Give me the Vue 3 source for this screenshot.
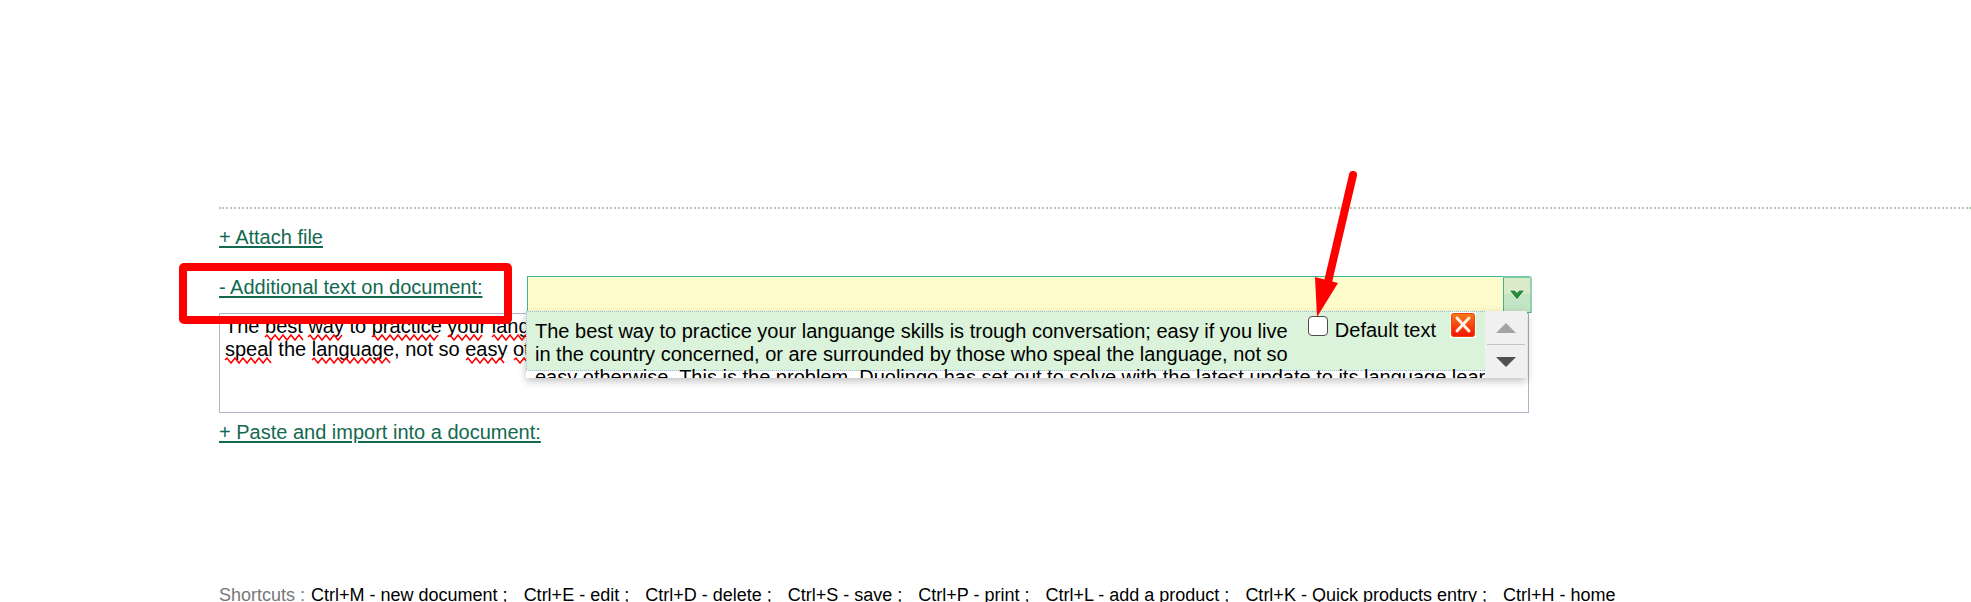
<script setup>
import { ref } from 'vue'

const search = ref('')
const isDefault = ref(false)
const documentText = ref(
  'The best way to practice your languange skills is trough conversation; easy if you live in the country concerned, or are surrounded by those who speal the language, not so easy otherwise.'
)
const suggestion = [
  'The best way to practice your languange skills is trough conversation; easy if you live',
  'in the country concerned, or are surrounded by those who speal the language, not so',
  'easy otherwise. This is the problem. Duolingo has set out to solve with the latest update to its language learning',
]
const shortcuts = [
  'Ctrl+M - new document',
  'Ctrl+E - edit',
  'Ctrl+D - delete',
  'Ctrl+S - save',
  'Ctrl+P - print',
  'Ctrl+L - add a product',
  'Ctrl+K - Quick products entry',
  'Ctrl+H - home',
]

// Spelling marks: start x, end x and line top, relative to the text box
const misspelled = [
  [46, 84, 22], [89, 124, 22], [153, 222, 22], [229, 266, 22], [273, 330, 22],
  [6, 52, 45], [93, 174, 45], [247, 288, 45], [295, 330, 45],
]
function wave([from, to, y]) {
  let d = `M${from} ${y + 2}L${from + 2} ${y}`
  for (let x = from + 6, low = true; x <= to; x += 4, low = !low) d += `L${x} ${low ? y + 5 : y}`
  return d
}
</script>

<template>
  <main class="page">
    <section class="options">
      <p class="row"><a href="#attach">+ Attach file</a></p>
      <div class="row heading">
        <a href="#additional" class="toggle">- Additional text on document:</a>
        <svg class="frame" width="336" height="64" viewBox="0 0 336 64" aria-hidden="true">
          <rect x="5" y="5" width="325" height="53" rx="1" fill="none" stroke="#f00" stroke-width="8" stroke-linejoin="round" />
        </svg>
        <div class="combo">
          <input v-model="search" type="text" aria-label="Saved texts" />
          <button type="button" class="drop" aria-label="Show saved texts">
            <svg width="18" height="14" viewBox="0 0 18 14"><path d="M1 2h6l2 2.500 2-2.500h6L9 12z" fill="#268a38" stroke="#eef8ea" stroke-width="1" /></svg>
          </button>
          <div class="popup">
            <div class="list">
              <div class="item">
                <div class="text"><div v-for="line in suggestion" :key="line">{{ line }}</div></div>
                <label class="default"><input v-model="isDefault" type="checkbox" />Default text</label>
                <button type="button" class="close" aria-label="Delete text">
                  <svg width="26" height="26" viewBox="0 0 26 26">
                    <defs>
                      <linearGradient id="close-fill" x1="0" y1="0" x2="0" y2="1">
                        <stop offset="0" stop-color="#f87a16" /><stop offset="0.5" stop-color="#f4470f" /><stop offset="1" stop-color="#f01400" />
                      </linearGradient>
                    </defs>
                    <rect width="26" height="26" fill="#fff" />
                    <rect x="1.5" y="1.5" width="23" height="23" rx="2" fill="url(#close-fill)" stroke="#e8440c" />
                    <path d="M7 6L19 19M19 6L7 19" stroke="#fff3e6" stroke-width="3" stroke-linecap="round" />
                  </svg>
                </button>
              </div>
            </div>
            <div class="scroll">
              <button type="button" aria-label="Scroll up"><svg width="20" height="10" viewBox="0 0 20 10"><path d="M0 10L10 0L20 10z" fill="#a3a3a3" /></svg></button>
              <button type="button" aria-label="Scroll down"><svg width="20" height="10" viewBox="0 0 20 10"><path d="M0 0H20L10 10z" fill="#505050" /></svg></button>
            </div>
          </div>
          <svg class="arrow" width="44" height="148" viewBox="0 0 44 148" aria-hidden="true">
            <path d="M39 5L14 112" stroke="#f00" stroke-width="8" stroke-linecap="round" />
            <path d="M1 107L24 113L3 147z" fill="#f00" />
          </svg>
        </div>
      </div>
      <div class="editor">
        <textarea v-model="documentText" aria-label="Additional text on document" spellcheck="false"></textarea>
        <svg class="marks" width="320" height="60" viewBox="0 0 320 60" aria-hidden="true">
          <path v-for="mark in misspelled" :key="mark.join()" :d="wave(mark)" fill="none" stroke="#f00" stroke-width="1.5" />
        </svg>
      </div>
      <p class="row paste"><a href="#paste">+ Paste and import into a document:</a></p>
    </section>
    <footer class="shortcuts">
      <span class="label">Shortcuts :</span>
      <span v-for="(s, i) in shortcuts" :key="s" class="key">{{ s }}{{ i < shortcuts.length - 1 ? ' ;' : '' }}</span>
    </footer>
  </main>
</template>

<style>
body { margin: 0; background: #fff; }
html { overflow: hidden; }
</style>

<style scoped>
.page {
  padding: 207px 0 0 219px;
  font: 20px/23px "Liberation Sans", Arial, sans-serif;
  color: #000;
}
.options { border-top: 2px dotted #b4ccb4; padding-top: 17px; }
.row { margin: 0; }
a { color: #13694f; text-decoration: underline; text-decoration-thickness: 2px; text-underline-offset: 2px; }
.heading { position: relative; display: flex; width: 1313px; max-width: 100%; height: 37px; margin-top: 27px; }
.toggle { flex: none; width: 308px; }
.frame { position: absolute; left: -41px; top: -14px; z-index: 4; }
.combo { position: relative; flex: 1; display: flex; }
.combo > input {
  flex: 1; min-width: 0; box-sizing: border-box; border: 1px solid #3eb59a; border-right: 0;
  background: #fffccc; font: inherit; padding: 0 8px; outline: 0;
}
button { border: 0; padding: 0; background: none; font: inherit; }
.drop {
  display: flex; align-items: center; justify-content: center; width: 29px; box-sizing: border-box;
  border: 1px solid #3eb59a; border-top: 2px solid #7cc9aa; border-right: 2px solid #93d0b0;
  border-top-right-radius: 3px;
  background: linear-gradient(#d8eac8 48%, #c2e5c6 48%);
}
.drop svg { flex: none; }
.popup {
  position: absolute; z-index: 2; left: -1px; right: 5px; top: 35px; height: 67px;
  display: flex; background: #fff; box-shadow: 0 3px 8px rgba(0, 0, 0, 0.25);
}
.list { flex: 1; min-width: 0; overflow: hidden; }
.item {
  display: flex; box-sizing: border-box; height: 60px; padding-left: 8px;
  background: #daf3da; border: 1px dotted #9dbbe0; border-right: 0;
}
.text { flex: 1; min-width: 0; padding-top: 8px; white-space: nowrap; }
.default { display: flex; flex: none; height: 26px; margin-top: 7px; gap: 7px; }
.default input {
  appearance: none; width: 20px; height: 20px; margin: -3px 0 0; box-sizing: border-box;
  border: 1px solid #4c4c4c; border-radius: 4px; background: #fff;
}
.close { flex: none; width: 26px; height: 26px; margin: 0 9px 0 14px; }
.close svg, .scroll svg { display: block; }
.scroll { flex: none; width: 42px; box-sizing: border-box; padding: 0 2px; background: #f0f0f0; display: flex; flex-direction: column; }
.scroll button { flex: 1; display: flex; align-items: center; justify-content: center; }
.scroll button + button { border-top: 1px solid #c2c2c2; }
.arrow { position: absolute; z-index: 5; right: 174px; top: -106px; }
.editor { position: relative; width: 1310px; max-width: 100%; }
textarea {
  display: block; width: 100%; height: 100px; box-sizing: border-box; padding: 1px 5px;
  border: 1px solid #b2b2c8; background: #fff; font: inherit; color: inherit; resize: none; outline: 0; overflow: hidden;
}
.marks { position: absolute; left: 0; top: 0; }
.paste { margin-top: 8px; }
.shortcuts { margin-top: 141px; font-size: 18px; line-height: 21px; white-space: nowrap; }
.label { color: #777; margin-right: 6px; }
.key { margin-right: 16px; }
</style>
